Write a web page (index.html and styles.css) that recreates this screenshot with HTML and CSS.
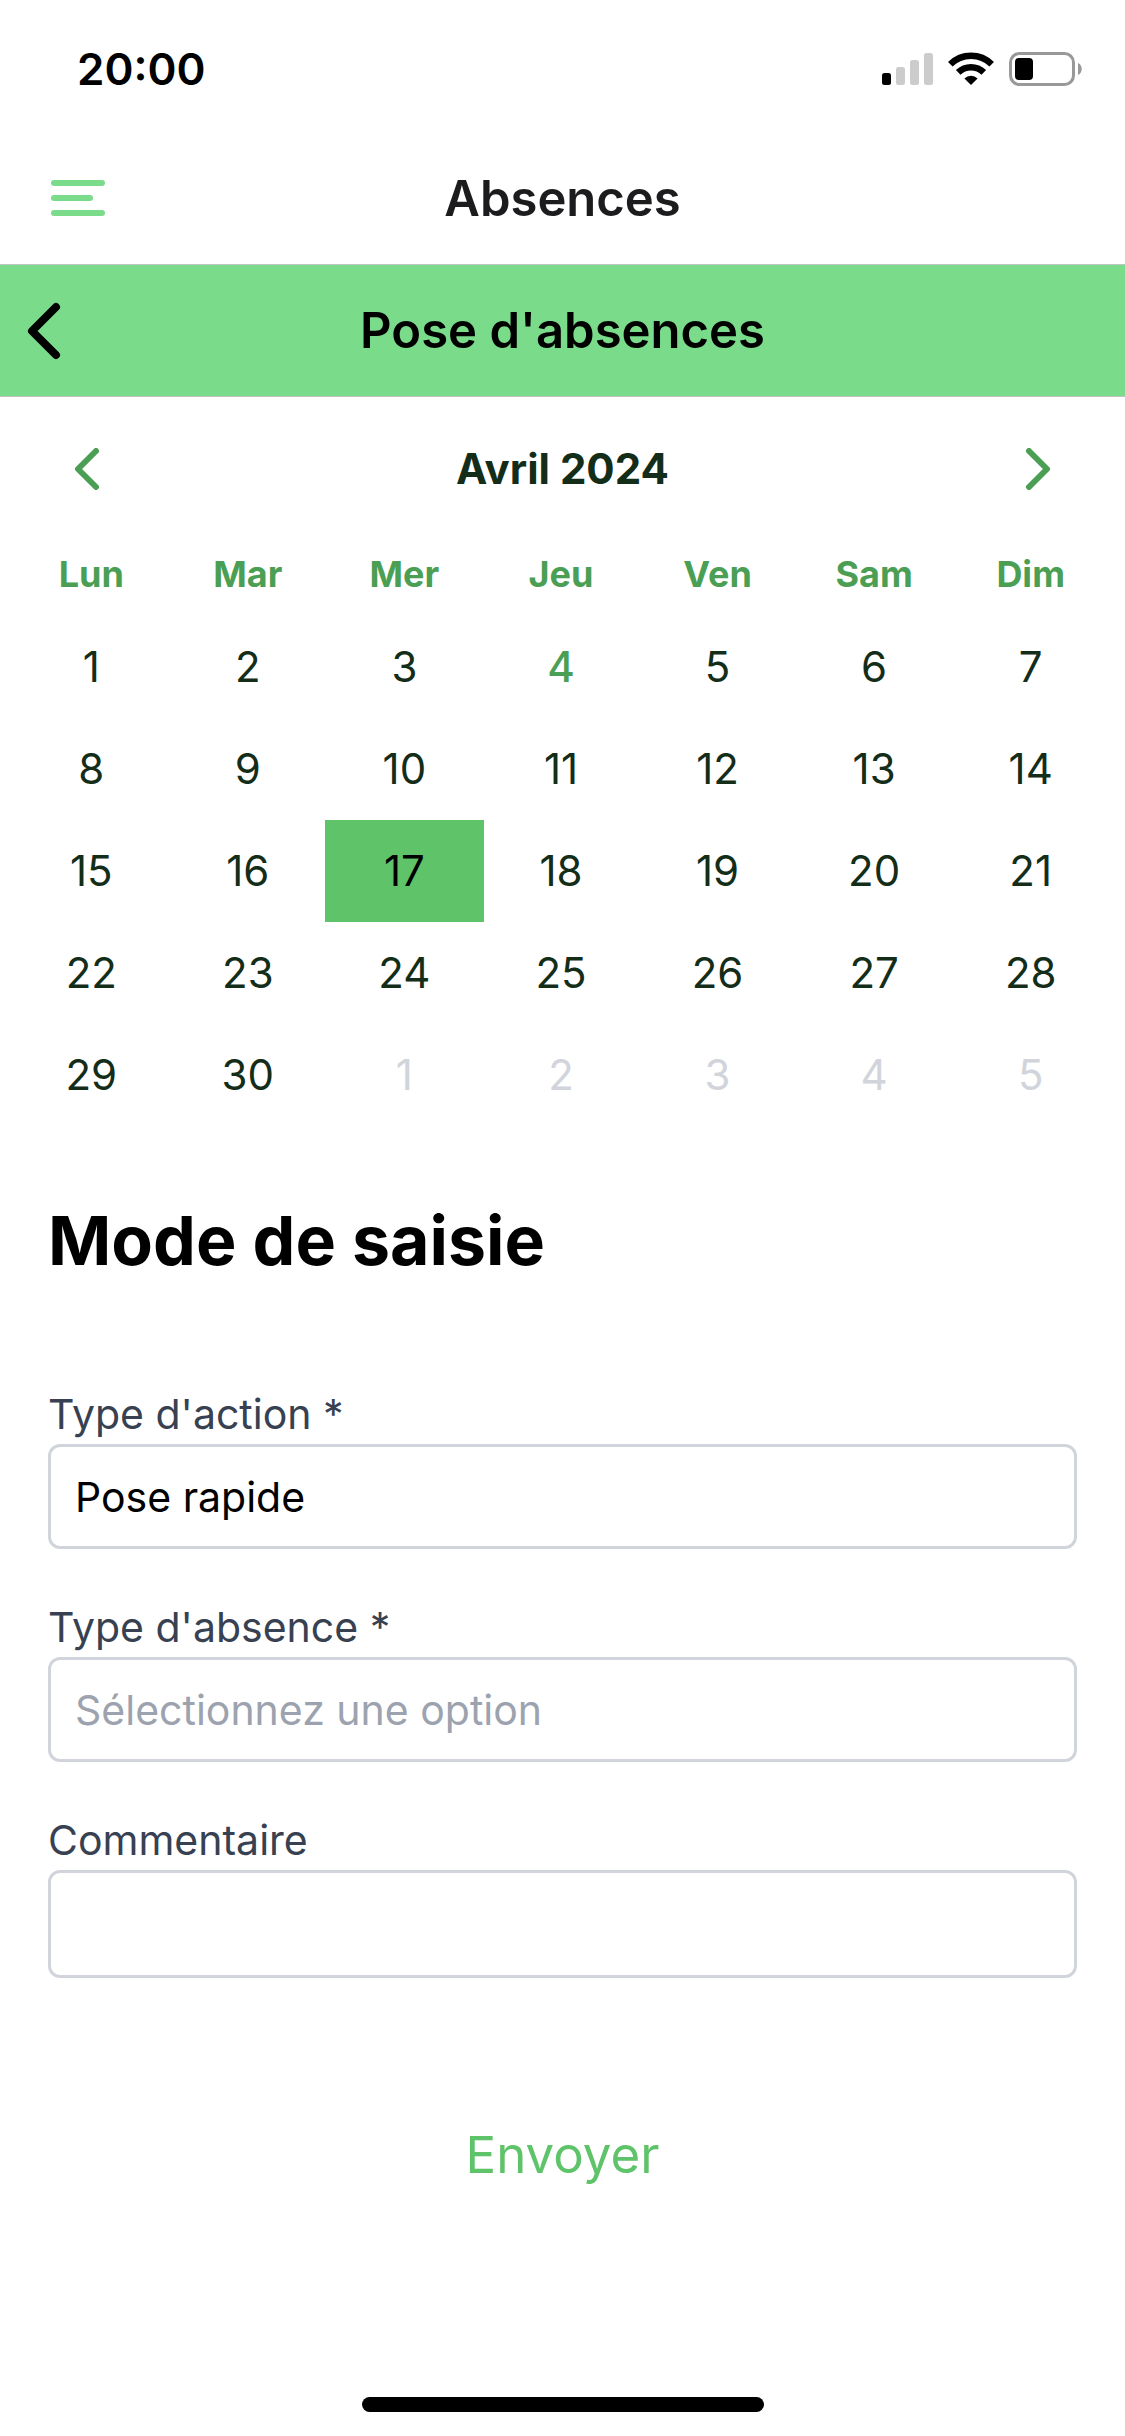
FILE: index.html
```html
<!DOCTYPE html>
<html lang="fr">
<head>
    <meta charset="UTF-8">
    <meta name="viewport" content="width=device-width, initial-scale=1.0">
    <title>Pose d'absences</title>

    <link rel="stylesheet" href="styles.css">
</head>
<body>
    <!-- Barre de statut -->
    <div class="status-bar">
        <span class="time">20:00</span>
        <svg class="status-icons" width="200" height="34" viewBox="0 0 200 34">
            <rect x="0" y="21" width="9" height="12" rx="2.5" fill="#000"/>
            <rect x="14" y="15" width="9" height="18" rx="2.5" fill="#ccc"/>
            <rect x="28" y="8" width="9" height="25" rx="2.5" fill="#ccc"/>
            <rect x="42" y="1" width="9" height="32" rx="2.5" fill="#ccc"/>
            <g fill="none" stroke="#000" stroke-width="6.5">
                <path d="M68.3 12.2a29.5 29.5 0 0 1 41.4 0"/>
                <path d="M76.2 20.4a18.2 18.2 0 0 1 25.6 0"/>
            </g>
            <path d="M89 33l-6.6-6.6a9.6 9.6 0 0 1 13.2 0z" fill="#000"/>
            <rect x="128.500" y="1.500" width="63" height="31" rx="9" fill="none" stroke="#999" stroke-width="3"/>
            <rect x="133" y="6" width="18" height="22" rx="4" fill="#000"/>
            <path d="M196 11c5 2 5 10 0 12z" fill="#999"/>
        </svg>
    </div>

    <header class="header">
        <button type="button" class="icon-button menu-button" aria-label="Menu">
            <svg width="54" height="36" viewBox="0 0 54 36" fill="none" stroke="#7adc8a" stroke-width="6" stroke-linecap="round">
                <path d="M3 3h48M3 18h36M3 33h48"/>
            </svg>
        </button>
        <h1>Absences</h1>
    </header>

    <div class="sub-header">
        <button type="button" class="icon-button back-button" aria-label="Retour">
            <svg width="34" height="58" viewBox="0 0 34 58" fill="none" stroke="#000" stroke-width="8" stroke-linecap="round" stroke-linejoin="round">
                <path d="M29 5L5 29l24 24"/>
            </svg>
        </button>
        <h2>Pose d'absences</h2>
    </div>

    <main>
        <!-- Calendrier -->
        <section class="calendar">
            <div class="calendar-nav">
                <button type="button" class="icon-button" aria-label="Mois précédent">
                    <svg width="26" height="42" viewBox="0 0 26 42" fill="none" stroke="#4a9f54" stroke-width="6" stroke-linecap="round" stroke-linejoin="round">
                        <path d="M22 3L4 21l18 18"/>
                    </svg>
                </button>
                <h3>Avril 2024</h3>
                <button type="button" class="icon-button" aria-label="Mois suivant">
                    <svg width="26" height="42" viewBox="0 0 26 42" fill="none" stroke="#4a9f54" stroke-width="6" stroke-linecap="round" stroke-linejoin="round">
                        <path d="M4 3l18 18L4 39"/>
                    </svg>
                </button>
            </div>
            <table>
                <thead>
                    <tr><th>Lun</th><th>Mar</th><th>Mer</th><th>Jeu</th><th>Ven</th><th>Sam</th><th>Dim</th></tr>
                </thead>
                <tbody id="days"></tbody>
            </table>
        </section>

        <!-- Formulaire -->
        <form class="form">
            <h2 class="form-title">Mode de saisie</h2>

            <div class="field">
                <label for="type-action">Type d'action *</label>
                <select id="type-action" required>
                    <option selected>Pose rapide</option>
                </select>
            </div>

            <div class="field">
                <label for="type-absence">Type d'absence *</label>
                <select id="type-absence" class="empty" required>
                    <option value="" selected>Sélectionnez une option</option>
                </select>
            </div>

            <div class="field">
                <label for="commentaire">Commentaire</label>
                <input type="text" id="commentaire">
            </div>

            <button type="submit" class="submit">Envoyer</button>
        </form>
    </main>

    <div class="home-indicator"></div>

    <script>
        const daysInMonth = 30;
        const today = 4;
        const selected = 17;
        const tbody = document.getElementById("days");

        // Avril 2024 commence un lundi
        for (let week = 0; week < 5; week++) {
            const row = document.createElement("tr");
            for (let i = 1; i <= 7; i++) {
                const n = week * 7 + i;
                const button = document.createElement("button");
                button.type = "button";
                button.className = "day";
                button.textContent = n > daysInMonth ? n - daysInMonth : n;
                if (n > daysInMonth) button.classList.add("outside");
                if (n === today) button.classList.add("today");
                if (n === selected) button.classList.add("selected");
                const cell = document.createElement("td");
                cell.appendChild(button);
                row.appendChild(cell);
            }
            tbody.appendChild(row);
        }
    </script>
</body>
</html>
```

FILE: styles.css
```css
* {
    box-sizing: border-box;
    margin: 0;
    padding: 0;
    font-family: Inter, sans-serif;
}

body {
    display: flex;
    flex-direction: column;
    min-height: 100vh;
    background-color: #fff;
    color: #000;
}

button {
    border: none;
    background: none;
    cursor: pointer;
}

.icon-button svg {
    display: block;
}

.status-bar {
    display: flex;
    justify-content: space-between;
    align-items: center;
    height: 132px;
    padding: 6px 43px 0 77px;
}

.time {
    font-size: 44px;
    font-weight: 600;
}

.header,
.sub-header {
    display: grid;
    grid-template-columns: 1fr auto 1fr;
    align-items: center;
    height: 133px;
    border-bottom: 1px solid #c0c4c0;
}

.header h1,
.sub-header h2 {
    font-size: 49px;
    font-weight: 600;
}

.header h1 {
    color: #1c1c1e;
}

.sub-header {
    height: 132px;
    background-color: #7adc8a;
}

.menu-button,
.back-button {
    justify-self: start;
}

.menu-button {
    margin-left: 51px;
}

.back-button {
    margin-left: 27px;
}

.calendar {
    padding: 0 16px 0 13px;
}

.calendar-nav {
    display: flex;
    justify-content: space-between;
    align-items: center;
    height: 143px;
    padding: 0 58px 0 61px;
}

.calendar-nav h3 {
    font-size: 42px;
    font-weight: 700;
    color: #132d18;
}

table {
    width: 100%;
    table-layout: fixed;
    border-collapse: collapse;
}

th {
    height: 76px;
    padding-bottom: 8px;
    font-size: 36px;
    font-weight: 700;
    color: #4a9f54;
}

.day {
    display: block;
    width: calc(100% + 2px);
    height: 102px;
    margin: 0 -1px;
    padding-bottom: 2px;
    font-size: 42px;
    color: #132d18;
}

.day.today {
    font-weight: 500;
    color: #4a9f54;
}

.day.selected {
    background-color: #5fc36a;
    color: #000;
}

.day.outside {
    color: #d1d5db;
}

.form {
    display: flex;
    flex-direction: column;
    gap: 48px;
    padding: 70px 48px;
}

.form-title {
    line-height: 88px;
    margin-bottom: 52px;
    font-size: 68px;
    font-weight: 700;
}

.field {
    display: flex;
    flex-direction: column;
}

.field label {
    line-height: 60px;
    font-size: 41px;
    color: #374151;
}

.field select,
.field input {
    width: 100%;
    height: 105px;
    padding: 0 24px;
    border: 3px solid #d1d5db;
    border-radius: 12px;
    appearance: none;
    background-color: #fff;
    font-size: 41px;
    color: #000;
}

.field input {
    height: 108px;
}

.field select.empty {
    color: #9ca3af;
}

.submit {
    align-self: center;
    margin-top: 98px;
    font-size: 51px;
    color: #5fc36a;
}

.home-indicator {
    width: 402px;
    height: 15px;
    margin: auto auto 24px;
    border-radius: 8px;
    background-color: #000;
}
```
